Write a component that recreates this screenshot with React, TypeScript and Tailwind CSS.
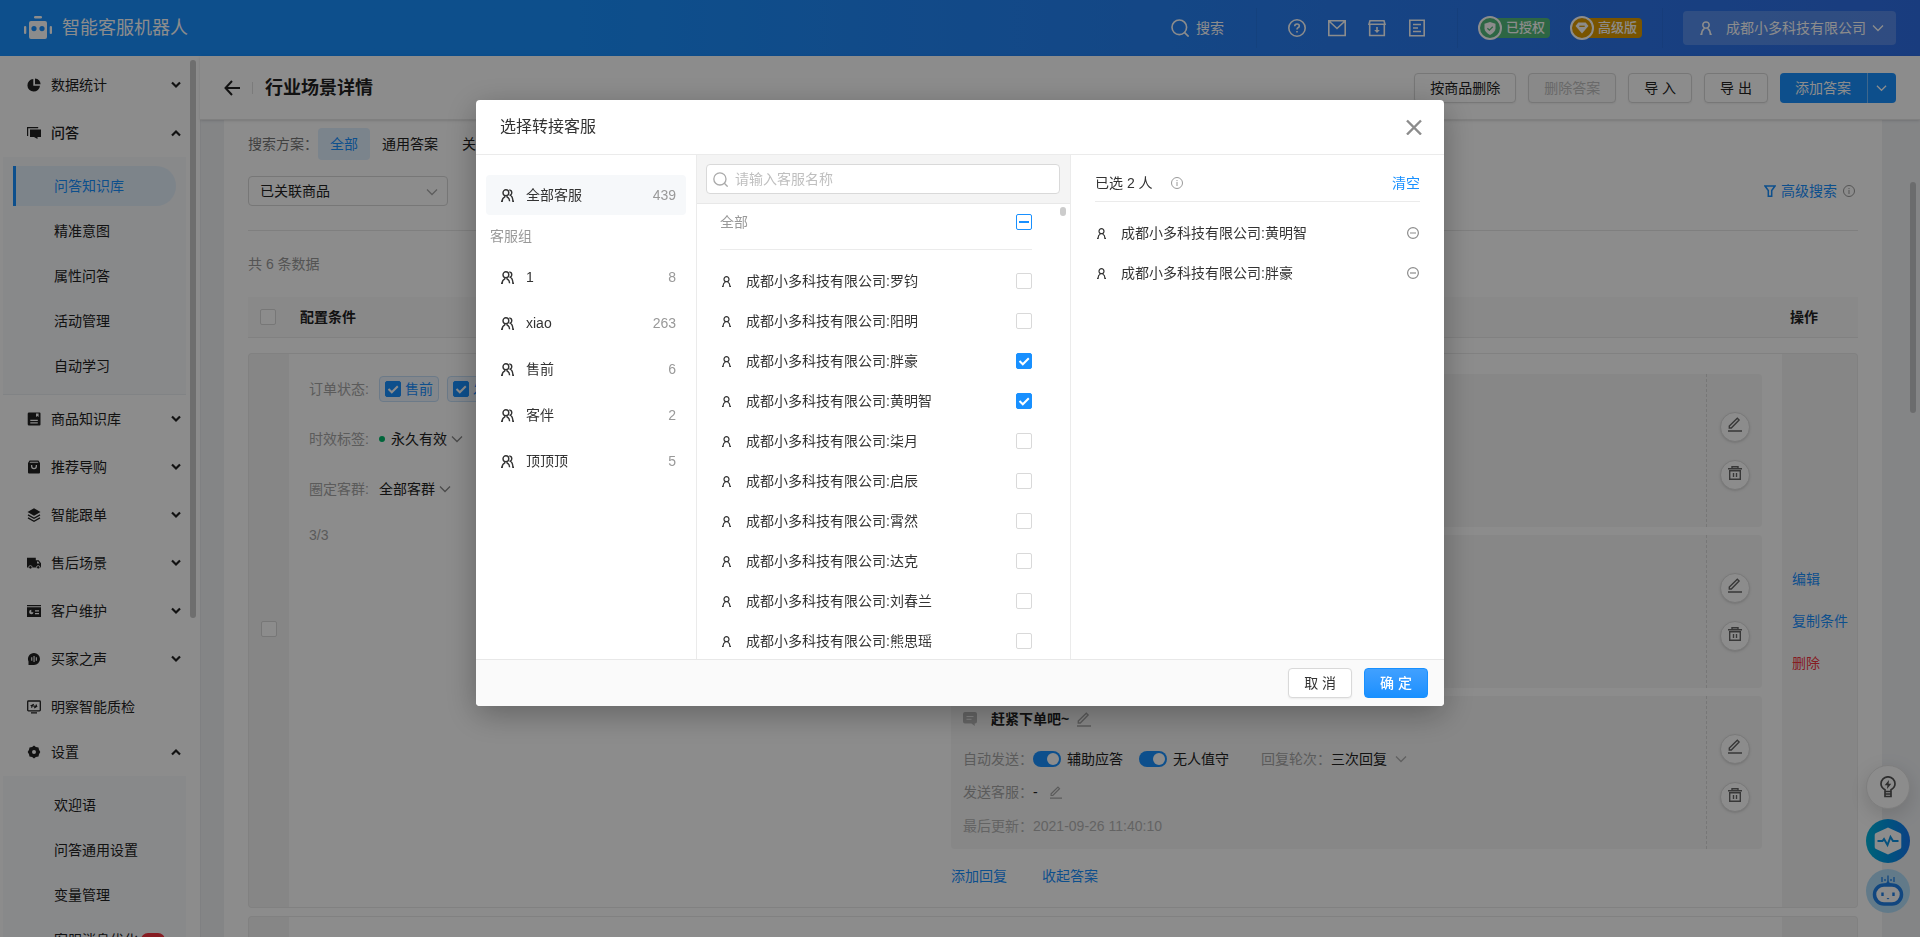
import React, { useState } from 'react';
import clsx from 'clsx';

interface IconProps {
    className?: string;
}

interface MenuItem {
    label: string;
    icon: React.ReactNode;
    arrow?: boolean;
    short?: boolean;
    children?: string[];
}

const menu: MenuItem[] = [
    {
        label: '数据统计',
        arrow: true,
        icon: <><path d="M6.3 1A6.3 6.3 0 1 0 13 7.8H6.3z" fill="currentColor" /><path d="M8 .4A6.3 6.3 0 0 1 13.6 6.2H8z" fill="currentColor" /></>,
    },
    {
        label: '问答',
        arrow: true,
        icon: <><path d="M.6 10V1.6h10.6" fill="none" stroke="currentColor" strokeWidth="1.2" /><path d="M3 3.5h11v7.5h-3.5v2L7 11H3z" fill="currentColor" /></>,
        children: ['问答知识库', '精准意图', '属性问答', '活动管理', '自动学习'],
    },
    {
        label: '商品知识库',
        arrow: true,
        icon: <path fillRule="evenodd" fill="currentColor" d="M2 .5h10.500q1 0 1 1v11q0 1-1 1H2q-1.300 0-1.300-1.300V1.800Q.7.5 2 .5zM9 1.500v3.500l1.300-1 1.300 1V1.500zM3.300 7.800v1.100h7.500V7.800zM3.300 10.300v1.100h7.500v-1.100z" />,
    },
    {
        label: '推荐导购',
        arrow: true,
        icon: <path fillRule="evenodd" fill="currentColor" d="M2.600.5h8.800L13 3v9.500q0 1-1 1H2q-1 0-1-1V3zM2.500 2.800h9l-.8-1H3.300zM4 5v1.300a3 3 0 0 0 6 0V5H8.700v1.300a1.700 1.700 0 0 1-3.400 0V5z" />,
    },
    {
        label: '智能跟单',
        arrow: true,
        icon: <><path d="M7 .3 13.500 4 7 7.700.5 4z" fill="currentColor" /><path d="m1 6.900 6 3.300 6-3.300M1 9.900l6 3.300 6-3.300" fill="none" stroke="currentColor" strokeWidth="1.300" /></>,
    },
    {
        label: '售后场景',
        arrow: true,
        icon: (
            <>
                <path fillRule="evenodd" fill="currentColor" d="M0 1.800h8.800v2.400h2.900L14 7.300V11.500H0zM10 5.500v2h2.600l-1.400-2z" />
                <circle cx="3.400" cy="11.300" r="1.700" fill="currentColor" stroke="#fff" strokeWidth=".8" />
                <circle cx="11.200" cy="11.300" r="1.700" fill="currentColor" stroke="#fff" strokeWidth=".8" />
            </>
        ),
    },
    {
        label: '客户维护',
        arrow: true,
        icon: <path fillRule="evenodd" fill="currentColor" d="M0 1h14v1.300H0zM0 3.200h14V13H0zM4.300 5.800a2.200 2.200 0 1 0 2.200 2.500H4.300zM8 6.300v1.200h4V6.300zM8 9v1.200h4V9z" />,
    },
    {
        label: '买家之声',
        arrow: true,
        icon: <path fillRule="evenodd" fill="currentColor" d="M7 1a6 6 0 1 1 0 12H1.500V9.500A6 6 0 0 1 7 1zM4.200 5.200v3.600h1.100V5.200zM6.500 4v6h1.100V4zM8.800 5.200v3.600h1.100V5.200z" />,
    },
    {
        label: '明察智能质检',
        short: true,
        icon: <><rect x=".7" y="1" width="12.600" height="9.800" rx=".8" fill="none" stroke="currentColor" strokeWidth="1.300" /><path d="M4 12.900h6M6.800 4.300 4.600 5.600l4.800 1L7.200 8M9.300 4.400v2M4.700 5.700v2" fill="none" stroke="currentColor" strokeWidth="1.200" /></>,
    },
    {
        label: '设置',
        arrow: true,
        icon: <path fillRule="evenodd" fill="currentColor" d="m7 .6 1.900 1.300 2.600.5.500 2.300L13.300 7 12 9.300l-.5 2.300-2.600.5L7 13.400l-1.900-1.300-2.600-.5L2 9.300.7 7 2 4.700l.5-2.300 2.600-.5zM7 5a2 2 0 1 0 0 4 2 2 0 0 0 0-4z" />,
        children: ['欢迎语', '问答通用设置', '变量管理', '客服消息优化'],
    },
];

const company = '成都小多科技有限公司';

const groups = [
    { name: '1', count: 8 },
    { name: 'xiao', count: 263 },
    { name: '售前', count: 6 },
    { name: '客伴', count: 2 },
    { name: '顶顶顶', count: 5 },
];

const people = ['罗钧', '阳明', '胖豪', '黄明智', '柒月', '启辰', '霄然', '达克', '刘春兰', '熊思瑶'];

const Chevron: React.FC<IconProps> = ({ className }) => (
    <svg viewBox="0 0 12 8" className={clsx('h-2 w-3 shrink-0', className)} fill="none" stroke="currentColor" strokeWidth="1.3">
        <path d="m1 1.500 5 5 5-5" />
    </svg>
);

const SearchIcon: React.FC<IconProps> = ({ className }) => (
    <svg viewBox="0 0 18 18" className={clsx('shrink-0', className)} fill="none" stroke="currentColor" strokeWidth="1.600">
        <circle cx="8.300" cy="8.300" r="7.300" />
        <path d="m13.600 13.600 4 4" />
    </svg>
);

const PersonIcon: React.FC<IconProps> = ({ className }) => (
    <svg viewBox="0 0 9 11" className={clsx('shrink-0', className)} fill="none" stroke="currentColor" strokeWidth="1.200">
        <circle cx="4.500" cy="3.200" r="2.500" />
        <path d="M3.200 5.500 2.700 6.500Q1.200 7.200 1.100 10.400H0M5.800 5.500l.5 1q1.500.7 1.600 3.900H9" />
    </svg>
);

const GroupIcon: React.FC<IconProps> = ({ className }) => (
    <svg viewBox="0 0 13 13" className={clsx('h-[13px] w-[13px] shrink-0', className)} fill="none" stroke="currentColor" strokeWidth="1.400">
        <circle cx="4.900" cy="3.700" r="2.900" />
        <path d="M0 12.300h1.200q0-3.200 2.400-4.100l.4-1.600M5.800 6.600l.4 1.600q2.300.9 2.400 4.100M8.300.9q2.500.4 2.500 2.800 0 1.700-1.500 2.400 2.500 1.400 2.600 6.200H13" />
    </svg>
);

const InfoIcon: React.FC<IconProps> = ({ className }) => (
    <svg viewBox="0 0 12 12" className={clsx('h-3 w-3 shrink-0', className)} fill="none" stroke="currentColor">
        <circle cx="6" cy="6" r="5.500" />
        <path d="M6 5v4M6 3v1.100" />
    </svg>
);

const PencilIcon: React.FC<IconProps> = ({ className }) => (
    <svg viewBox="0 0 14 15" className={clsx('shrink-0', className)} fill="none" stroke="currentColor" strokeWidth="1.400">
        <path d="M1.300 11V9L9.300 1.200l1.800 1.800L3.300 11zM0 14h14" />
    </svg>
);

const TrashIcon: React.FC<IconProps> = ({ className }) => (
    <svg viewBox="0 0 14 14" className={clsx('shrink-0', className)} fill="none" stroke="currentColor" strokeWidth="1.400">
        <path d="M0 2.700h14M4 2.500V.7h6v1.800M1.700 4.700h10.600v8.600H1.700zM5.500 7v4M8.500 7v4" />
    </svg>
);

interface CheckProps {
    label: string;
    checked?: boolean;
    partial?: boolean;
    onChange?: () => void;
}

const Check: React.FC<CheckProps> = ({ label, checked = false, partial, onChange }) => (
    <span className="grid h-4 w-4 shrink-0 place-items-center">
        <input
            type="checkbox"
            aria-label={label}
            checked={checked}
            onChange={onChange ?? (() => {})}
            className={clsx(
                'col-start-1 row-start-1 h-4 w-4 appearance-none rounded-[2px] border',
                checked ? 'border-[#1890ff] bg-[#1890ff]' : partial ? 'border-[#1890ff] bg-white' : 'border-[#d9d9d9] bg-white'
            )}
        />
        {checked && (
            <svg viewBox="0 0 16 16" className="pointer-events-none col-start-1 row-start-1 h-4 w-4" fill="none" stroke="#fff" strokeWidth="2">
                <path d="m3.500 8 3.300 3.300 6-6" />
            </svg>
        )}
        {partial && <span className="pointer-events-none col-start-1 row-start-1 h-0.5 w-[10px] bg-[#1890ff]" />}
    </span>
);

const Toggle: React.FC<{ label: string }> = ({ label }) => (
    <label className="flex items-center gap-1.5">
        <input
            type="checkbox"
            role="switch"
            defaultChecked
            className="relative h-4 w-7 appearance-none rounded-full bg-[#1890ff] before:absolute before:top-0.5 before:right-0.5 before:h-3 before:w-3 before:rounded-full before:bg-white"
        />
        {label}
    </label>
);

const InlineSelect: React.FC<{ label: string; value: string; chevron: string }> = ({ label, value, chevron }) => (
    <span className="flex items-center">
        <select aria-label={label} className="appearance-none bg-transparent leading-[22px]">
            <option>{value}</option>
        </select>
        <Chevron className={chevron} />
    </span>
);

const TopBar = () => (
    <header className="flex h-14 shrink-0 items-center bg-linear-to-r from-[#1890ff] from-30% to-[#2f6ee6] px-6 text-white">
        <svg viewBox="0 0 28 24" className="h-6 w-7" fill="currentColor">
            <rect x="10" y="0" width="8" height="2.500" rx="1.200" />
            <path fillRule="evenodd" d="M7 5h14q2 0 2 2v14q0 2-2 2H7q-2 0-2-2V7q0-2 2-2zM10 10a2.600 2.600 0 1 0 0 5.200A2.600 2.600 0 0 0 10 10zM18 10a2.600 2.600 0 1 0 0 5.200A2.600 2.600 0 0 0 18 10z" />
            <rect x="0" y="10" width="2.300" height="8" rx="1.100" />
            <rect x="25.700" y="10" width="2.300" height="8" rx="1.100" />
        </svg>
        <span className="ml-2.5 text-lg">智能客服机器人</span>

        <button className="ml-auto flex items-center gap-[7px]">
            <SearchIcon className="h-[18px] w-[18px]" />
            搜索
        </button>
        <i className="ml-8 mr-[31px] h-10 w-px bg-black/5" />
        <nav className="flex items-center gap-[22px]">
            <button aria-label="帮助">
                <svg viewBox="0 0 18 18" className="h-[18px] w-[18px]" fill="none" stroke="currentColor" strokeWidth="1.600">
                    <circle cx="9" cy="9" r="8.200" />
                    <path d="M6.700 7.300q0-2.300 2.300-2.300t2.300 2q0 1.200-1.300 1.800-1 .5-1 1.600M9 11.900v1.500" />
                </svg>
            </button>
            <button aria-label="消息">
                <svg viewBox="0 0 18 18" className="h-[18px] w-[18px]" fill="none" stroke="currentColor" strokeWidth="1.600">
                    <path d="M.8 1.800h16.400v14.700H.8zM1.500 2.500 9 9.500l7.500-7" />
                </svg>
            </button>
            <button aria-label="下载">
                <svg viewBox="0 0 18 18" className="h-[18px] w-[18px]" fill="none" stroke="currentColor" strokeWidth="1.600">
                    <path d="M1.700 5.500V16.500h14.600v-11M1 5.300l1-3.600h14l1 3.600zM9 8v4.500" />
                    <path d="M6.200 11h5.600L9 14z" fill="currentColor" stroke="none" />
                </svg>
            </button>
            <button aria-label="文档">
                <svg viewBox="0 0 18 18" className="h-[18px] w-[18px]" fill="none" stroke="currentColor" strokeWidth="1.600">
                    <path d="M1.800 1.200h14.400v15.600H1.800zM5 5.500h8M5 9h5M5 12.500h8" />
                </svg>
            </button>
        </nav>
        <i className="ml-[31px] mr-5 h-10 w-px bg-black/5" />
        <div className="flex gap-5 text-[13px] font-medium leading-5">
            <span className="flex items-center">
                <span className="z-10 grid h-6 w-6 place-items-center rounded-full border-2 bg-[#53bb7c]">
                    <svg viewBox="0 0 12 13" className="h-[13px] w-3" fill="none">
                        <path d="M6 0l5.500 1.800v4.800Q11.500 10 6 13 .5 10 .5 6.600V1.800z" fill="#fff" />
                        <path d="m3.400 6.200 2 2 3.400-3.400" stroke="#53bb7c" strokeWidth="1.300" />
                    </svg>
                </span>
                <span className="-ml-3 rounded-r bg-[#53bb7c] pl-4 pr-[5px]">已授权</span>
            </span>
            <span className="flex items-center">
                <span className="z-10 grid h-6 w-6 place-items-center rounded-full border-2 bg-[#dc9a00]">
                    <svg viewBox="0 0 14 12" className="h-3 w-3.5" fill="none">
                        <path d="M3.300.5h7.400L13.500 4 7 11.500.5 4z" fill="#fff" />
                        <path d="M4.300 4.300h5.400" stroke="#dc9a00" strokeWidth="1.300" />
                    </svg>
                </span>
                <span className="-ml-3 rounded-r bg-[#dc9a00] pl-4 pr-[5px]">高级版</span>
            </span>
        </div>
        <i className="mx-5 h-10 w-px bg-black/5" />
        <button className="flex h-[34px] items-center rounded bg-white/20 pl-[17px] pr-3">
            <PersonIcon className="h-3.5 w-3" />
            <span className="ml-3.5 mr-1.5">{company}</span>
            <Chevron />
        </button>
    </header>
);

const Sidebar = () => (
    <aside className="relative w-[200px] shrink-0 overflow-hidden bg-white pt-[5px]">
        {menu.map((item) => (
            <div key={item.label}>
                <button
                    className={clsx(
                        'flex w-full items-center gap-2.5 pl-[27px] pr-[19px]',
                        item.short ? 'h-[45px] pt-[3px]' : 'h-12',
                        item.label === '问答' && 'font-medium'
                    )}
                >
                    <svg viewBox="0 0 14 14" className="h-3.5 w-3.5 shrink-0">{item.icon}</svg>
                    {item.label}
                    {item.arrow && (
                        <svg
                            viewBox="0 0 10 8"
                            className={clsx('ml-auto h-2 w-2.5', item.children && 'rotate-180')}
                            fill="none"
                            stroke="currentColor"
                            strokeWidth="2.200"
                        >
                            <path d="m1 1.500 4 4 4-4" />
                        </svg>
                    )}
                </button>
                {item.children && (
                    <div className="ml-[3px] mr-3.5 flex flex-col gap-[5px] border-b border-[#ebeef2] bg-[#f7f9fc] pt-[9px] pb-2 pl-2.5 pr-2.5">
                        {item.children.map((child) => (
                            <a
                                key={child}
                                href="#"
                                className={clsx(
                                    'flex h-10 shrink-0 items-center rounded-r-full border-l-[3px] pl-[38px]',
                                    child === '问答知识库' ? 'border-[#1890ff] bg-[#e4f0fc] text-[#1890ff]' : 'border-transparent'
                                )}
                            >
                                {child}
                                {child === '客服消息优化' && (
                                    <span className="ml-[3px] h-3.5 w-6 rounded-full bg-[#f5333f]" />
                                )}
                            </a>
                        ))}
                    </div>
                )}
            </div>
        ))}
        <div className="absolute top-1 right-1 h-[558px] w-1.5 rounded-full bg-[#c9c9c9]" />
    </aside>
);

const plainButton = 'h-[30px] rounded border border-[#d9d9d9] px-[15px] shadow-[0_1px_2px_rgba(0,0,0,0.06)]';

const PageHeader = () => (
    <div className="z-10 flex h-16 shrink-0 items-center border-b border-[#e8e8e8] bg-white px-6 shadow-sm">
        <button aria-label="返回">
            <svg viewBox="0 0 16 16" className="h-4 w-4" fill="none" stroke="currentColor" strokeWidth="2">
                <path d="M8 1 1.500 8 8 15M1.500 8H16" />
            </svg>
        </button>
        <i className="mx-3 h-3 w-px bg-[#e0e0e0]" />
        <h1 className="text-lg font-bold">行业场景详情</h1>
        <div className="ml-auto flex gap-3">
            <button className={plainButton}>按商品删除</button>
            <button disabled className={clsx(plainButton, 'bg-[#f9f9f9] text-[#bfbfbf]')}>删除答案</button>
            <button className={plainButton}>导 入</button>
            <button className={plainButton}>导 出</button>
            <span className="flex h-[30px] overflow-hidden rounded bg-[#1890ff] text-white">
                <button className="pl-[15px] pr-4">添加答案</button>
                <button aria-label="更多" className="w-[29px] border-l border-white/40 pl-2"><Chevron className="w-[11px]" /></button>
            </span>
        </div>
    </div>
);

const RoundButton: React.FC<{ label: string; children: React.ReactNode }> = ({ label, children }) => (
    <button aria-label={label} className="grid h-[30px] w-[30px] place-items-center rounded-full border border-[#ddd] bg-white pb-1 text-[#666] shadow-sm">
        {children}
    </button>
);

const AnswerCard = () => (
    <div className="flex rounded bg-[#f6f6f6]">
        <div className="flex-1 p-3">
            <div className="flex items-center font-bold leading-[22px]">
                <svg viewBox="0 0 14 14" className="h-3.5 w-3.5">
                    <path d="M2 0h10q2 0 2 2v7.500q0 2-2 2h-.3V14L8.500 11.500H2q-2 0-2-2V2q0-2 2-2z" fill="#b8b8b8" />
                    <path d="M3.500 4.500h7M3.500 7.300h5" stroke="#f0f0f0" />
                </svg>
                <span className="ml-3.5 mr-2">赶紧下单吧~</span>
                <PencilIcon className="h-[15px] w-3.5 text-[#a6a6a6]" />
            </div>
            <div className="mt-[18px] flex h-[22px] items-center">
                <span className="text-[#a6a6a6]">自动发送：</span>
                <Toggle label="辅助应答" />
                <span className="ml-4"><Toggle label="无人值守" /></span>
                <span className="ml-8 text-[#a6a6a6]">回复轮次：</span>
                <InlineSelect label="回复轮次" value="三次回复" chevron="ml-2 text-[#b0b0b0]" />
            </div>
            <div className="mt-[11px] flex items-center leading-[22px]">
                <span className="text-[#a6a6a6]">发送客服：</span>
                <span className="mr-3">-</span>
                <PencilIcon className="h-[13px] w-3 text-[#a6a6a6]" />
            </div>
            <div className="mt-3 leading-[22px] text-[#b5b5b5]">最后更新：2021-09-26 11:40:10</div>
        </div>
        <div className="flex w-14 flex-col items-center justify-center gap-[18px] border-l border-dashed border-[#d9d9d9]">
            <RoundButton label="编辑答案"><PencilIcon className="h-[15px] w-3.5" /></RoundButton>
            <RoundButton label="删除答案"><TrashIcon className="h-3.5 w-3.5" /></RoundButton>
        </div>
    </div>
);

const sideCell = 'border-[#ebebeb] bg-[#f5f5f5] align-middle';

const AnswerRow = () => (
    <tr>
        <td className={clsx(sideCell, 'rounded-l border border-r-0')}>
            <div className="flex justify-center pb-1"><Check label="选择条件" /></div>
        </td>
        <td className="border-y border-[#ebebeb] pt-[22px] pl-5 align-top">
            <div className="flex flex-col gap-6">
                <div className="flex h-[26px] items-center">
                    <span className="mr-3 w-[58px] whitespace-nowrap text-[#a6a6a6]">订单状态:</span>
                    {['售前', '发货', '售后'].map((tag) => (
                        <label key={tag} className="mr-2 flex h-[26px] items-center gap-1 rounded border border-[#c5dff8] bg-[#eef6ff] px-[5px] text-[#1890ff]">
                            <Check label={tag} checked />
                            {tag}
                        </label>
                    ))}
                </div>
                <div className="flex h-[26px] items-center">
                    <span className="mr-3 w-[58px] whitespace-nowrap text-[#a6a6a6]">时效标签:</span>
                    <i className="mr-1.5 h-1.5 w-1.5 rounded-full bg-[#00b96b]" />
                    <InlineSelect label="时效标签" value="永久有效" chevron="ml-1 text-[#888]" />
                </div>
                <div className="flex h-[26px] items-center">
                    <span className="mr-3 w-[58px] whitespace-nowrap text-[#a6a6a6]">圈定客群:</span>
                    <InlineSelect label="圈定客群" value="全部客群" chevron="ml-1 text-[#888]" />
                </div>
                <span className="leading-[18px] text-[#a6a6a6]">3/3</span>
            </div>
        </td>
        <td className="border-y border-[#ebebeb] py-5 pr-5">
            <div className="flex flex-col gap-2">
                <AnswerCard />
                <AnswerCard />
                <AnswerCard />
            </div>
            <div className="mt-4 flex gap-[35px] leading-[22px] text-[#1890ff]">
                <a href="#">添加回复</a>
                <a href="#">收起答案</a>
            </div>
        </td>
        <td className={clsx(sideCell, 'rounded-r border border-l-0 pl-2.5')}>
            <div className="flex flex-col gap-5 pb-5 whitespace-nowrap leading-[22px] text-[#1890ff]">
                <a href="#">编辑</a>
                <a href="#">复制条件</a>
                <a href="#" className="text-[#f5333f]">删除</a>
            </div>
        </td>
    </tr>
);

const Content = () => (
    <div className="relative flex-1 overflow-hidden pl-6 pr-[38px]">
        <div className="bg-white px-6 pt-2">
            <div className="flex h-8 items-center">
                <span className="text-[#777]">搜索方案：</span>
                {['全部', '通用答案', '关联商品'].map((tab) => (
                    <button key={tab} className={clsx('h-8 rounded px-3', tab === '全部' && 'bg-[#e0f0ff] text-[#1890ff]')}>{tab}</button>
                ))}
            </div>
            <div className="mt-4 flex items-center">
                <div className="relative w-[200px]">
                    <select aria-label="商品" className="h-[30px] w-full appearance-none rounded border border-[#d9d9d9] pl-[11px]">
                        <option>已关联商品</option>
                    </select>
                    <Chevron className="pointer-events-none absolute top-3 right-2.5 text-[#aaa]" />
                </div>
                <a href="#" className="ml-auto flex items-center text-[#1890ff]">
                    <svg viewBox="0 0 12 12" className="mr-[5px] h-3 w-3" fill="none" stroke="currentColor" strokeWidth="1.500">
                        <path d="M1 1h10L7.700 5.500v5.700H4.300V5.500z" />
                    </svg>
                    高级搜索
                </a>
                <InfoIcon className="ml-1.5 mr-[3px] text-[#999]" />
            </div>
            <div className="mt-6 border-t border-[#e8e8e8] pt-[22px] leading-[22px] text-[#999]">共 6 条数据</div>

            <table className="mt-[22px] w-full table-fixed border-separate border-spacing-0 text-left">
                <colgroup>
                    <col className="w-[41px]" />
                    <col />
                    <col className="w-[831px]" />
                    <col className="w-[76px]" />
                </colgroup>
                <thead>
                    <tr className="h-[41px] bg-[#fafafa]">
                        <th className="border-b border-[#ebebeb] pl-3"><Check label="全选" /></th>
                        <th className="border-b border-[#ebebeb] pl-[11px] font-bold">配置条件</th>
                        <th className="border-b border-[#ebebeb] font-bold">答案</th>
                        <th className="border-b border-[#ebebeb] pl-2 font-bold">操作</th>
                    </tr>
                </thead>
                <tbody>
                    <tr className="h-[15px]"><td colSpan={4} /></tr>
                    <AnswerRow />
                    <tr className="h-2"><td colSpan={4} /></tr>
                    <tr className="h-20">
                        <td className={clsx(sideCell, 'rounded-l border border-r-0')} />
                        <td className="border-y border-[#ebebeb]" />
                        <td className="border-y border-[#ebebeb]" />
                        <td className={clsx(sideCell, 'rounded-r border border-l-0')} />
                    </tr>
                </tbody>
            </table>
        </div>
        <div className="absolute top-[62px] right-1 h-[231px] w-1.5 rounded-full bg-[#c4c5c7]" />
    </div>
);

const FloatingTools = () => (
    <div className="fixed right-2.5 bottom-6 z-20 flex flex-col items-center">
        <button aria-label="提示" className="mb-2.5 grid h-11 w-11 place-items-center rounded-full border border-[#e5e5e5] bg-white text-[#555] shadow-[0_6px_20px_rgba(0,0,0,0.15)]">
            <svg viewBox="0 0 16 22" className="h-[22px] w-4" fill="none" stroke="currentColor" strokeWidth="1.700">
                <path d="M5 15.500v-1.700Q1 11.500 1 7.800a7 7 0 0 1 14 0q0 3.700-4 6v1.700zM5 15.500h6v5H5zM5 18h6" />
                <path d="M9 4 4.700 9.300h2.700L7 13l4.300-5.300H8.600z" fill="currentColor" stroke="none" />
            </svg>
        </button>
        <button aria-label="监控" className="mb-1.5 grid h-11 w-11 place-items-center rounded-full bg-linear-to-r from-[#00b4dc] to-[#1677f0]">
            <svg viewBox="0 0 28 28" className="h-7 w-7">
                <path d="M14 .5 26 6q1.300.6 1.300 2v12q0 1.400-1.300 2l-12 5.500L2 22Q.7 21.400.7 20V8Q.7 6.600 2 6z" fill="#fff" />
                <path d="M3.500 14h5L10 12l3.500 6 3-8 2.500 4h5.500" fill="none" stroke="#0c94e6" strokeWidth="2" />
            </svg>
        </button>
        <button aria-label="机器人" className="grid h-11 w-11 place-items-center rounded-full bg-[#b2dffa]">
            <svg viewBox="0 0 32 32" className="h-8 w-8">
                <rect x="2.500" y="10" width="27" height="19" rx="9.500" fill="#fff" stroke="#1f80e8" strokeWidth="3.500" />
                <path d="M10 2v5M13 4v2M16 .5V8M19 4v2M22 2v5" stroke="#1f80e8" strokeWidth="1.300" />
                <path d="M11.500 9q4-1 4.500-4 .5 3 4.500 4z" fill="#1f80e8" />
                <path d="M10.500 17.500v3.500M21.500 17.500v3.500" stroke="#1f80e8" strokeWidth="2.400" />
                <path d="M14.500 23h3L16 24.500z" fill="#1f80e8" />
            </svg>
        </button>
    </div>
);

const TransferDialog = () => {
    const [selected, setSelected] = useState<string[]>(['黄明智', '胖豪']);

    const toggle = (name: string) => {
        setSelected(selected.includes(name) ? selected.filter((n) => n !== name) : [...selected, name]);
    };

    return (
        <div className="fixed inset-0 z-30 flex items-start justify-center bg-black/45 pt-[100px]">
            <div role="dialog" aria-label="选择转接客服" className="w-[968px] overflow-hidden rounded bg-white text-[#333] shadow-[0_8px_32px_rgba(0,0,0,0.3)]">
                <div className="flex h-[55px] items-center justify-between border-b border-[#ebebeb] pl-6 pr-[22px]">
                    <h2 className="text-base">选择转接客服</h2>
                    <button aria-label="关闭">
                        <svg viewBox="0 0 16 16" className="h-4 w-4" fill="none" stroke="#8c8c8c" strokeWidth="2.400">
                            <path d="m1 1.500 14 14M15 1.500l-14 14" />
                        </svg>
                    </button>
                </div>

                <div className="flex h-[504px]">
                    <div className="w-[221px] border-r border-[#ebebeb] px-2.5 pt-5">
                        <button className="flex h-10 w-full items-center rounded bg-[#f6f8fa] pl-[15px] pr-2.5">
                            <GroupIcon className="mr-3" />
                            全部客服
                            <span className="ml-auto text-[#999]">439</span>
                        </button>
                        <div className="mt-2.5 mb-[7px] pl-1 leading-[22px] text-[#999]">客服组</div>
                        {groups.map((group) => (
                            <button key={group.name} className="flex h-[46px] w-full items-center pl-[15px] pr-2.5">
                                <GroupIcon className="mr-3" />
                                {group.name}
                                <span className="ml-auto text-[#999]">{group.count}</span>
                            </button>
                        ))}
                    </div>

                    <div className="relative w-[374px] overflow-hidden border-r border-[#ebebeb]">
                        <div className="border-b border-[#e8e8e8] bg-[#f4f4f4] py-[9px] pl-[9px] pr-2.5">
                            <label className="flex h-[30px] items-center rounded border border-[#d9d9d9] bg-white pl-1.5">
                                <SearchIcon className="h-[15px] w-[15px] text-[#aaa]" />
                                <input
                                    type="text"
                                    aria-label="客服名称"
                                    placeholder="请输入客服名称"
                                    className="ml-[7px] flex-1 outline-none placeholder:text-[#bfbfbf]"
                                />
                            </label>
                        </div>
                        <div className="pl-[23px] pr-[38px]">
                            <div className="mb-[11px] flex h-[46px] items-center justify-between border-b border-[#ebebeb] pb-[9px]">
                                <span className="text-[#999]">全部</span>
                                <Check label="全部" partial />
                            </div>
                            {people.map((name) => (
                                <label key={name} className="flex h-10 items-center">
                                    <PersonIcon className="ml-[2px] mr-[15px] h-[11px] w-[9px]" />
                                    <span className="flex-1">{company}:{name}</span>
                                    <Check label={name} checked={selected.includes(name)} onChange={() => toggle(name)} />
                                </label>
                            ))}
                        </div>
                        <div className="absolute top-[52px] right-1 h-[9px] w-1.5 rounded-full bg-[#ccc]" />
                    </div>

                    <div className="flex-1 px-6 pt-[17px]">
                        <div className="mb-[11px] flex h-[30px] items-center border-b border-[#ebebeb] pb-[7px]">
                            已选 {selected.length} 人
                            <InfoIcon className="ml-[18px] text-[#999]" />
                            <button className="ml-auto text-[#1890ff]" onClick={() => setSelected([])}>清空</button>
                        </div>
                        {selected.map((name) => (
                            <div key={name} className="flex h-10 items-center">
                                <PersonIcon className="ml-[2px] mr-[15px] h-[11px] w-[9px]" />
                                {company}:{name}
                                <button aria-label="移除" className="ml-auto mr-px" onClick={() => toggle(name)}>
                                    <svg viewBox="0 0 12 12" className="h-3 w-3" fill="none" stroke="#8c8c8c" strokeWidth="1.200">
                                        <circle cx="6" cy="6" r="5.400" />
                                        <path d="M3 6h6" />
                                    </svg>
                                </button>
                            </div>
                        ))}
                    </div>
                </div>

                <div className="flex h-[47px] items-center justify-end gap-3 border-t border-[#e8e8e8] bg-[#fafafa] pr-4">
                    <button className={clsx(plainButton, 'bg-white')}>取 消</button>
                    <button className="h-[30px] rounded border border-[#1890ff] bg-linear-to-b from-[#40a0ff] to-[#1890ff] px-[15px] font-medium text-white">确 定</button>
                </div>
            </div>
        </div>
    );
};

export default function App() {
    return (
        <div className="flex h-screen flex-col overflow-hidden bg-[#f0f2f5] font-['Liberation_Sans','Noto_Sans_CJK_SC',sans-serif] text-sm text-[#222]">
            <TopBar />
            <div className="flex min-h-0 flex-1">
                <Sidebar />
                <main className="flex min-w-0 flex-1 flex-col shadow-[inset_1px_0_0_#e8eaed]">
                    <PageHeader />
                    <Content />
                </main>
            </div>
            <FloatingTools />
            <TransferDialog />
        </div>
    );
}
